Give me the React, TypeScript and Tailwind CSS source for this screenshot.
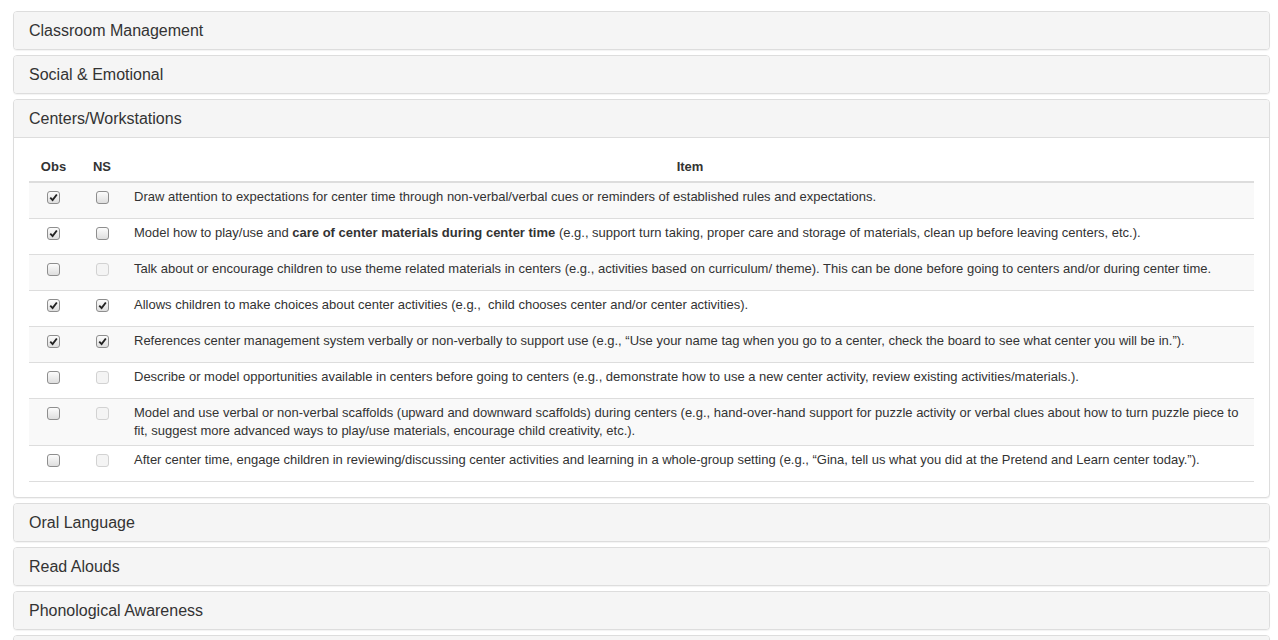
import * as React from 'react';

type Row = {
  obs: boolean;
  ns: boolean;
  nsDisabled?: boolean;
  text: React.ReactNode;
};

const rows: Row[] = [
  {
    obs: true,
    ns: false,
    text: 'Draw attention to expectations for center time through non-verbal/verbal cues or reminders of established rules and expectations.',
  },
  {
    obs: true,
    ns: false,
    text: (
      <>
        Model how to play/use and <b>care of center materials during center time</b> (e.g., support turn taking, proper care and storage of materials, clean up before leaving centers, etc.).
      </>
    ),
  },
  {
    obs: false,
    ns: false,
    nsDisabled: true,
    text: 'Talk about or encourage children to use theme related materials in centers (e.g., activities based on curriculum/ theme). This can be done before going to centers and/or during center time.',
  },
  {
    obs: true,
    ns: true,
    text: 'Allows children to make choices about center activities (e.g.,\u00a0 child chooses center and/or center activities).',
  },
  {
    obs: true,
    ns: true,
    text: 'References center management system verbally or non-verbally to support use (e.g., \u201cUse your name tag when you go to a center, check the board to see what center you will be in.\u201d).',
  },
  {
    obs: false,
    ns: false,
    nsDisabled: true,
    text: 'Describe or model opportunities available in centers before going to centers (e.g., demonstrate how to use a new center activity, review existing activities/materials.).',
  },
  {
    obs: false,
    ns: false,
    nsDisabled: true,
    text: 'Model and use verbal or non-verbal scaffolds (upward and downward scaffolds) during centers (e.g., hand-over-hand support for puzzle activity or verbal clues about how to turn puzzle piece to fit, suggest more advanced ways to play/use materials, encourage child creativity, etc.).',
  },
  {
    obs: false,
    ns: false,
    nsDisabled: true,
    text: 'After center time, engage children in reviewing/discussing center activities and learning in a whole-group setting (e.g., \u201cGina, tell us what you did at the Pretend and Learn center today.\u201d).',
  },
];

function Box({ checked, disabled }: { checked: boolean; disabled?: boolean }) {
  return (
    <span
      className={
        disabled
          ? 'mt-[3px] flex h-[13px] w-[13px] items-center justify-center rounded-[3px] border border-[#d2d2d2] bg-[#f4f4f4]'
          : 'mt-[3px] flex h-[13px] w-[13px] items-center justify-center rounded-[3px] border border-[#8e8e8e] bg-gradient-to-b from-[#fcfcfc] to-[#dedede]'
      }
    >
      {checked && (
        <svg viewBox="0 0 10 10" className="h-[9px] w-[9px]">
          <path d="M1.4 5.2 L4 7.9 L8.7 1.7" fill="none" stroke="#222" strokeWidth="2.1" />
        </svg>
      )}
    </span>
  );
}

function Panel({ title, children }: { title: string; children?: React.ReactNode }) {
  const open = !!children;
  return (
    <div className="rounded-[4px] border border-[#ddd] bg-white shadow-[0_1px_1px_rgba(0,0,0,0.05)]">
      <div
        className={
          'rounded-t-[3px] bg-[#f5f5f5] px-[15px] py-[10px] text-[16px] leading-[17px] text-[#333] ' +
          (open ? 'border-b border-[#ddd]' : 'rounded-b-[3px]')
        }
      >
        {title}
      </div>
      {children}
    </div>
  );
}

export default function App() {
  return (
    <div className="min-h-screen bg-white pl-[13px] pr-[8px] pt-[11px] font-['Liberation_Sans',Arial,sans-serif] text-[#333]">
      <div className="flex flex-col gap-[5px]">
        <Panel title="Classroom Management" />
        <Panel title="Social & Emotional" />
        <Panel title="Centers/Workstations">
          <div className="p-[15px]">
            <div className="grid grid-cols-[49px_48px_1fr] border-b-2 border-[#ddd] text-[13px] font-bold leading-[18px]">
              <div className="py-[5px] text-center">Obs</div>
              <div className="py-[5px] text-center">NS</div>
              <div className="py-[5px] text-center">Item</div>
            </div>
            {rows.map((r, i) => (
              <div
                key={i}
                className={
                  'grid min-h-[36px] grid-cols-[49px_48px_1fr] border-b border-[#ddd] text-[13px] leading-[18px] ' +
                  (i % 2 === 0 ? 'bg-[#f9f9f9]' : 'bg-white')
                }
              >
                <div className="flex justify-center py-[5px]">
                  <Box checked={r.obs} />
                </div>
                <div className="flex justify-center py-[5px] pl-[1px]">
                  <Box checked={r.ns} disabled={r.nsDisabled} />
                </div>
                <div className="px-[8px] py-[5px]">{r.text}</div>
              </div>
            ))}
          </div>
        </Panel>
        <Panel title="Oral Language" />
        <Panel title="Read Alouds" />
        <Panel title="Phonological Awareness" />
        <Panel title={'\u00a0'} />
      </div>
    </div>
  );
}
